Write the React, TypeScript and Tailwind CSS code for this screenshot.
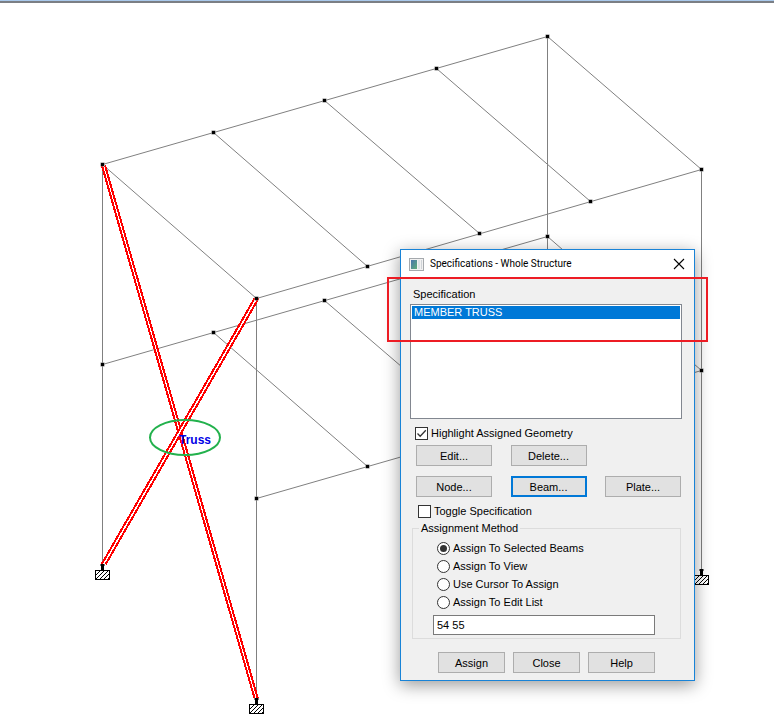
import React, { useState } from 'react';

type Point = [number, number];

const NODES: Point[] = [
    [102, 164], [213, 132], [324, 100], [436, 68], [547, 36],
    [256, 298], [367, 266], [479, 233], [590, 201], [701, 169],
    [102, 364], [213, 332], [324, 300], [436, 268], [547, 236],
    [256, 498], [367, 466], [701, 370],
];

const MEMBERS: [Point, Point][] = [
    // roof
    [[102, 164], [547, 36]],
    [[256, 298], [701, 169]],
    [[102, 164], [256, 298]],
    [[213, 132], [367, 266]],
    [[324, 100], [479, 233]],
    [[436, 68], [590, 201]],
    [[547, 36], [701, 169]],
    // lower floor
    [[102, 364], [547, 236]],
    [[256, 498], [701, 370]],
    [[213, 332], [367, 466]],
    [[324, 300], [479, 433]],
    [[547, 236], [701, 370]],
    // columns
    [[102, 164], [102, 564]],
    [[256, 298], [256, 699]],
    [[547, 36], [547, 436]],
    [[701, 169], [701, 570]],
];

// start, end, half the distance between the two strokes
const BRACES: [Point, Point, number][] = [
    [[103, 165], [256, 699], 1.6],
    [[256, 298], [103, 564], 2],
];

const SUPPORTS: Point[] = [[102, 564], [256, 698], [701, 569]];

const METHODS = ['Assign To Selected Beams', 'Assign To View', 'Use Cursor To Assign', 'Assign To Edit List'];

function Structure() {
    return (
        <svg className="absolute left-0 top-0" width="774" height="724" viewBox="0 0 774 724" aria-label="Structure">
            <g transform="translate(0.5 0.5)">
                {MEMBERS.map(([a, b], i) => (
                    <line key={i} x1={a[0]} y1={a[1]} x2={b[0]} y2={b[1]} stroke="#808080" />
                ))}
                {BRACES.map(([a, b, gap], i) => (
                    <g key={i} shapeRendering="crispEdges" stroke="#f00" strokeWidth="2">
                        <line x1={a[0]} y1={a[1]} x2={b[0]} y2={b[1]} stroke="#fff" strokeWidth="3" />
                        <line x1={a[0] - gap} y1={a[1]} x2={b[0] - gap} y2={b[1]} />
                        <line x1={a[0] + gap} y1={a[1]} x2={b[0] + gap} y2={b[1]} />
                    </g>
                ))}
                {NODES.map(([x, y], i) => (
                    <g key={i}>
                        <rect x={x - 2} y={y - 2} width="4" height="4" fill="#808080" />
                        <rect x={x - 1.5} y={y - 1.5} width="3" height="3" fill="#000" />
                    </g>
                ))}
            </g>
            {SUPPORTS.map(([x, y], i) => (
                <g key={i} transform={`translate(${x - 7} ${y})`} shapeRendering="crispEdges">
                    <rect x="5" y="0" width="5" height="2" fill="#808080" />
                    <rect x="6" y="0" width="3" height="6" fill="#000" />
                    <rect x="0.5" y="6.5" width="14" height="9" fill="#fff" stroke="#000" />
                    <path d="M1 11l4-4M1 15l8-8M5 15l8-8M9 15l5-5M13 15l1-1" stroke="#000" />
                </g>
            ))}
            <text x="179" y="444" fill="#0000e6" className="font-['Liberation_Sans',sans-serif] text-xs font-bold">Truss</text>
            <ellipse cx="185" cy="437.5" rx="35" ry="17.5" fill="none" stroke="#22b14c" strokeWidth="2" />
        </svg>
    );
}

function CheckBox({ label, defaultChecked }: { label: string; defaultChecked?: boolean }) {
    return (
        <label className="flex h-4 items-center gap-[3px]">
            <span className="relative size-[13px]">
                <input
                    type="checkbox"
                    defaultChecked={defaultChecked}
                    className="peer block size-[13px] appearance-none border border-[#333] bg-white"
                />
                <svg className="pointer-events-none absolute inset-0 hidden peer-checked:block" width="13" height="13" viewBox="0 0 13 13">
                    <path d="M2.5 6.5l2.7 2.8 5.6-6" fill="none" stroke="#333" strokeWidth="1.3" />
                </svg>
            </span>
            {label}
        </label>
    );
}

function PushButton({ label, className = '' }: { label: string; className?: string }) {
    return (
        <button type="button" className={`h-[21px] bg-[#e1e1e1] ${className || 'border border-[#adadad]'}`}>
            {label}
        </button>
    );
}

function SpecificationsDialog() {
    const [method, setMethod] = useState(METHODS[0]);

    return (
        <section
            role="dialog"
            aria-labelledby="dialog-title"
            className="absolute left-[400px] top-[249px] w-[295px] border border-[#1883d7] bg-[#f0f0f0] text-[11px] leading-4 text-black shadow-[0_4px_16px_rgba(0,0,0,0.4)]"
        >
            <header className="flex h-7 items-center bg-white pl-2 pr-[7px]">
                <svg width="15" height="13" viewBox="0 0 15 13">
                    <defs>
                        <linearGradient id="pane" x1="0" y1="0" x2="1" y2="1">
                            <stop offset="0" stopColor="#4a74ae" />
                            <stop offset="1" stopColor="#5fae78" />
                        </linearGradient>
                    </defs>
                    <rect x="0.5" y="0.5" width="14" height="12" fill="#f2f2f2" stroke="#a5a9ad" />
                    <rect x="2" y="2" width="6" height="9" fill="url(#pane)" />
                    <rect x="9" y="2" width="2" height="9" fill="#dfe3e6" />
                    <rect x="12" y="2" width="1" height="9" fill="#d0d4d8" />
                </svg>
                <h1 id="dialog-title" className="ml-1.5 flex-1 font-['Roboto',sans-serif] text-[10px]">Specifications - Whole Structure</h1>
                <button type="button" aria-label="Close window" className="p-0.5">
                    <svg width="12" height="12" viewBox="0 0 12 12">
                        <path d="M1 1l10 10M11 1L1 11" stroke="#000" strokeWidth="1.1" />
                    </svg>
                </button>
            </header>

            <div className="pb-[7px] pl-[9px] pr-3 pt-2">
                <h2 id="spec-label" className="pl-[3px]">Specification</h2>
                <ul role="listbox" aria-labelledby="spec-label" tabIndex={0} className="mt-0.5 h-[115px] border border-[#828790] bg-white p-px">
                    <li role="option" aria-selected="true" className="h-[13px] bg-[#0078d7] pl-0.5 leading-[13px] text-white">MEMBER TRUSS</li>
                </ul>

                <div className="mt-1.5 pl-[5px]">
                    <CheckBox label="Highlight Assigned Geometry" defaultChecked />
                </div>
                <div className="mt-1 grid grid-cols-[76px_76px_76px] justify-between gap-y-2.5 pl-1.5 pr-px">
                    <PushButton label="Edit..." />
                    <PushButton label="Delete..." />
                    <span />
                    <PushButton label="Node..." />
                    <PushButton label="Beam..." className="border-2 border-[#0078d7]" />
                    <PushButton label="Plate..." />
                </div>
                <div className="mt-1.5 pl-2">
                    <CheckBox label="Toggle Specification" />
                </div>

                <fieldset className="ml-0.5 mr-px mt-px border border-[#dcdcdc] pb-[3px] pl-5 pr-[25px]">
                    <legend className="-ml-3.5 px-0.5">Assignment Method</legend>
                    <div className="pt-[3px]">
                        {METHODS.map((m) => (
                            <label key={m} className="ml-1 flex h-[18px] items-center gap-[3px]">
                                <input
                                    type="radio"
                                    name="method"
                                    checked={method === m}
                                    onChange={() => setMethod(m)}
                                    className="grid size-[13px] appearance-none place-content-center rounded-full border border-[#333] bg-white before:size-[7px] before:rounded-full checked:before:bg-[#333]"
                                />
                                {m}
                            </label>
                        ))}
                    </div>
                    <input
                        type="text"
                        aria-label="Edit list"
                        defaultValue="54 55"
                        className="mt-1 block h-5 w-full border border-[#7a7a7a] bg-white px-[3px] outline-none"
                    />
                </fieldset>

                <div className="ml-7 mr-[27px] mt-[13px] grid grid-cols-3 gap-2">
                    <PushButton label="Assign" />
                    <PushButton label="Close" />
                    <PushButton label="Help" />
                </div>
            </div>
        </section>
    );
}

export default function App() {
    return (
        <main className="relative min-h-screen overflow-hidden bg-white font-['Liberation_Sans',Arial,sans-serif]">
            <div className="h-[3px] border-b-2 border-[#7b7f85] bg-[#a9c9ec]" />
            <Structure />
            <SpecificationsDialog />
            {/* callout around the specification list */}
            <div className="pointer-events-none absolute left-[387px] top-[277px] h-[65px] w-[321px] border-2 border-[#ed1c24]" />
        </main>
    );
}
